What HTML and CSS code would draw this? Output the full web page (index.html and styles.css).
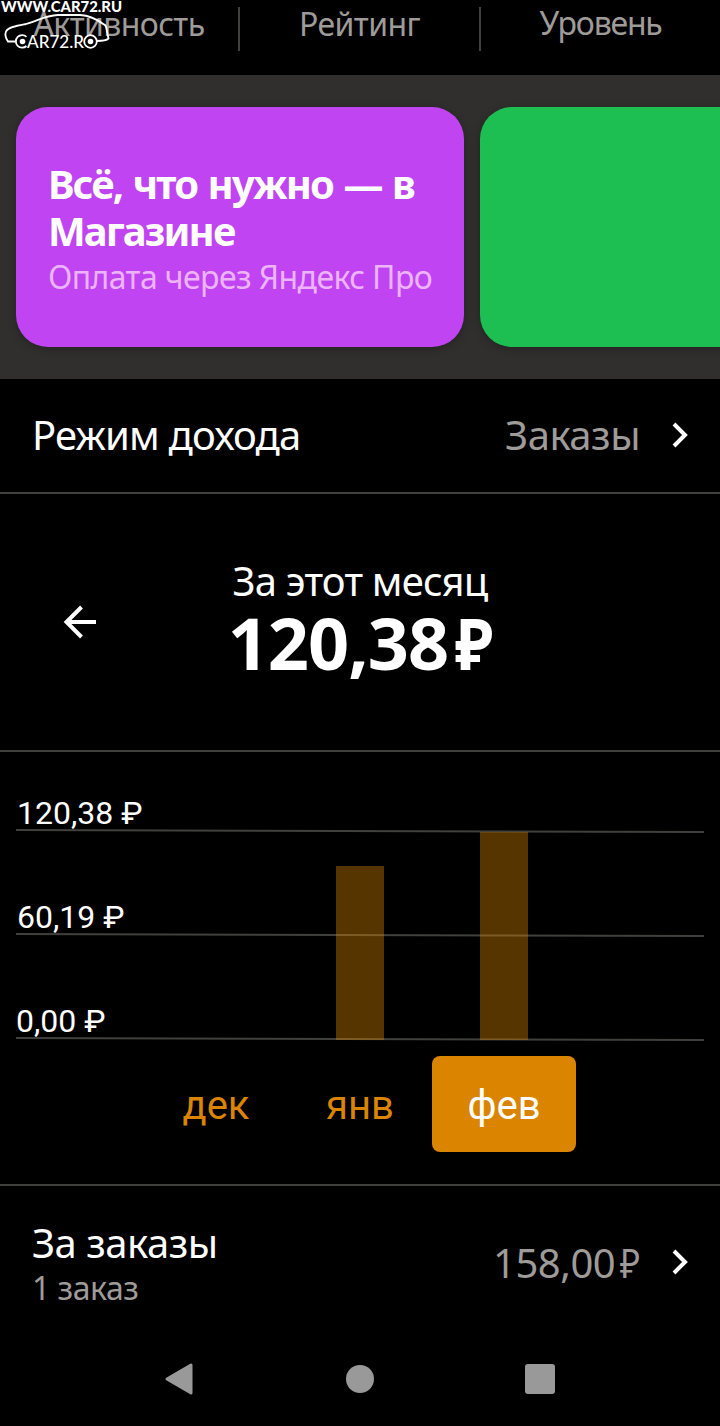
FILE: index.html
```html
<!DOCTYPE html>
<html lang="ru">
<head>
<meta charset="UTF-8">
<meta name="viewport" content="width=device-width, initial-scale=1.0">
<title>Доход</title>
<link rel="stylesheet" href="styles.css">
</head>
<body>
<svg class="watermark" width="130" height="52" viewBox="0 0 130 52">
    <text class="wm-site" x="1" y="12" textLength="121" lengthAdjust="spacingAndGlyphs">WWW.CAR72.RU</text>
    <path d="M16 41.500H8C5.500 38 5 34 6 31.500C8 27 18 25.500 26 24C37 21 45 15.500 58 15H80C90 15.500 98 20 104 24.500C107 25 106 29 108.500 38.500C106 41 102 41 97 41"/>
    <path d="M26.500 36.800A6.300 6.300 0 1 0 26.500 46"/>
    <circle cx="90.500" cy="41.500" r="6.300"/>
    <circle class="hub" cx="22.500" cy="41.500" r="2.800"/>
    <circle class="hub" cx="90.500" cy="41.500" r="2.800"/>
    <text class="wm-car" x="27" y="47.500" textLength="57" lengthAdjust="spacingAndGlyphs">AR72.R</text>
</svg>

<header class="stats">
    <div class="stat activity"><span>Активность</span></div>
    <div class="stat rating"><span>Рейтинг</span></div>
    <div class="stat level"><span>Уровень</span></div>
</header>

<section class="banners">
    <div class="banner shop">
        <h2>Всё, что нужно — в Магазине</h2>
        <p>Оплата через Яндекс Про</p>
    </div>
    <div class="banner green"></div>
</section>

<section class="row mode">
    <span class="row-title mode-title">Режим дохода</span>
    <span class="row-value mode-value">Заказы</span>
    <svg class="chevron" width="18" height="26" viewBox="0 0 18 26"><path d="M3 2L14 13L3 24"/></svg>
</section>

<section class="income">
    <svg class="back" width="34" height="34" viewBox="0 0 34 34"><path d="M33 17H3M18.500 2L3.500 17L18.500 32"/></svg>
    <div class="income-text">
        <div class="income-title">За этот месяц</div>
        <div class="income-sum">120,38<span class="rub">₽</span></div>
    </div>
</section>

<section class="chart">
    <svg class="plot" width="720" height="304" viewBox="0 0 720 304">
        <g class="grid">
            <path d="M16 78L704 80"/>
            <path d="M16 182L704 184"/>
            <path d="M16 286L704 288"/>
        </g>
        <g class="bars">
            <rect x="336" y="114" width="48" height="174"/>
            <rect x="480" y="80" width="48" height="208"/>
        </g>
        <text x="17" y="72">120,38 ₽</text>
        <text x="17" y="176">60,19 ₽</text>
        <text x="16" y="280">0,00 ₽</text>
    </svg>
    <div class="months">
        <div class="month">дек</div>
        <div class="month">янв</div>
        <div class="month active">фев</div>
    </div>
</section>

<section class="row orders">
    <div class="row-title">
        <div class="orders-title">За заказы</div>
        <div class="orders-count">1 заказ</div>
    </div>
    <span class="row-value orders-value">158,00<span class="rub">₽</span></span>
    <svg class="chevron" width="18" height="26" viewBox="0 0 18 26"><path d="M3 2L14 13L3 24"/></svg>
</section>

<nav class="system-nav">
    <svg width="36" height="36" viewBox="0 0 36 36"><path d="M5 18L29 4V32Z"/></svg>
    <svg width="36" height="36" viewBox="0 0 36 36"><circle cx="18" cy="18" r="14"/></svg>
    <svg width="36" height="36" viewBox="0 0 36 36"><rect x="3" y="3" width="30" height="30" rx="3"/></svg>
</nav>
</body>
</html>
```

FILE: styles.css
```css
* {
    box-sizing: border-box;
}
body {
    margin: 0;
    width: 720px;
    height: 1426px;
    overflow: hidden;
    background-color: #000;
    color: #fff;
    font-family: "Noto Sans", sans-serif;
    font-size: 40px;
}
h2, p {
    margin: 0;
}

/* site mark over the header */
.watermark {
    position: absolute;
    top: 0;
    left: 0;
    fill: none;
    stroke: #fff;
    stroke-width: 1.8;
}
.watermark text, .watermark .hub {
    fill: #fff;
    stroke: none;
}
.wm-site {
    font: 900 14.5px "Lato", sans-serif;
}
.wm-car {
    font: 500 18px "Lato", sans-serif;
}

.stats {
    display: grid;
    grid-template-columns: 240px 241px 239px;
    height: 75px;
    padding-top: 7px;
}
.stat {
    height: 44px;
    border-right: 2px solid #41403c;
    color: #9e9b98;
    font-size: 32px;
    letter-spacing: -0.6px;
    line-height: 34px;
    text-align: center;
}
.stat.level {
    border-right: none;
    letter-spacing: -1.2px;
    line-height: 32px;
}

.banners {
    display: flex;
    gap: 16px;
    height: 304px;
    padding: 32px 16px;
    background-color: #302f2d;
    overflow: hidden;
}
.banner {
    flex: 0 0 448px;
    height: 240px;
    border-radius: 32px;
    padding: 53px 0 0 32px;
    box-shadow: 0 2px 8px rgba(0, 0, 0, 0.25);
}
.banner.shop {
    background-color: #c044f2;
}
.banner.green {
    background-color: #1dbf53;
}
.banner h2 {
    width: 400px;
    font-size: 40px;
    letter-spacing: -1.9px;
    line-height: 47px;
    word-spacing: 2px;
}
.banner p {
    margin-top: 3px;
    color: #ecb4fb;
    font-size: 32px;
    letter-spacing: -0.6px;
    line-height: 40px;
    white-space: nowrap;
}

.row {
    display: flex;
    align-items: center;
    padding: 0 31px 0 32px;
}
.row-title {
    flex: 1;
}
.row-value {
    margin-right: 31px;
    color: #9e9b98;
    letter-spacing: -0.5px;
}
.chevron {
    fill: none;
    stroke: #fff;
    stroke-width: 4;
}
.mode {
    height: 115px;
    padding-bottom: 2px;
    border-bottom: 2px solid #41403c;
}
.mode-title {
    letter-spacing: -0.8px;
}

.income {
    display: grid;
    grid-template-columns: 196px 1fr 196px;
    height: 258px;
    border-bottom: 2px solid #41403c;
}
.back {
    align-self: center;
    margin-left: 63px;
    fill: none;
    stroke: #fff;
    stroke-width: 4;
}
.income-text {
    padding-top: 62px;
    text-align: center;
    white-space: nowrap;
}
.income-title {
    letter-spacing: -0.8px;
    line-height: 49px;
}
.income-sum {
    font-size: 72px;
    font-weight: bold;
    letter-spacing: -1px;
    line-height: 74px;
}
.rub {
    display: inline-block;
    margin-left: 2px;
    transform: scaleX(0.88);
    transform-origin: right;
}

.chart {
    height: 434px;
    border-bottom: 2px solid #41403c;
    font-family: "Roboto", sans-serif;
}
.plot {
    display: block;
}
.plot text {
    fill: #fff;
    font-size: 32px;
}
.grid {
    stroke: #41403c;
    stroke-width: 2;
}
.bars {
    fill: #da8400;
    fill-opacity: 0.4;
}
.months {
    display: grid;
    grid-template-columns: repeat(3, 144px);
    justify-content: center;
}
.month {
    height: 96px;
    border-radius: 8px;
    color: #da8400;
    line-height: 99px;
    text-align: center;
}
.month.active {
    background-color: #da8400;
    color: #fff;
}

.orders {
    height: 152px;
}
.orders-title {
    padding-top: 2px;
    letter-spacing: -0.5px;
    line-height: 48px;
}
.orders-count {
    color: #9e9b98;
    font-size: 32px;
    letter-spacing: -0.5px;
    line-height: 41px;
}

.system-nav {
    display: flex;
    justify-content: center;
    gap: 144px;
    padding-top: 23px;
}
.system-nav svg {
    fill: #999;
}
.system-nav path {
    stroke: #999;
    stroke-width: 3;
    stroke-linejoin: round;
}
```
